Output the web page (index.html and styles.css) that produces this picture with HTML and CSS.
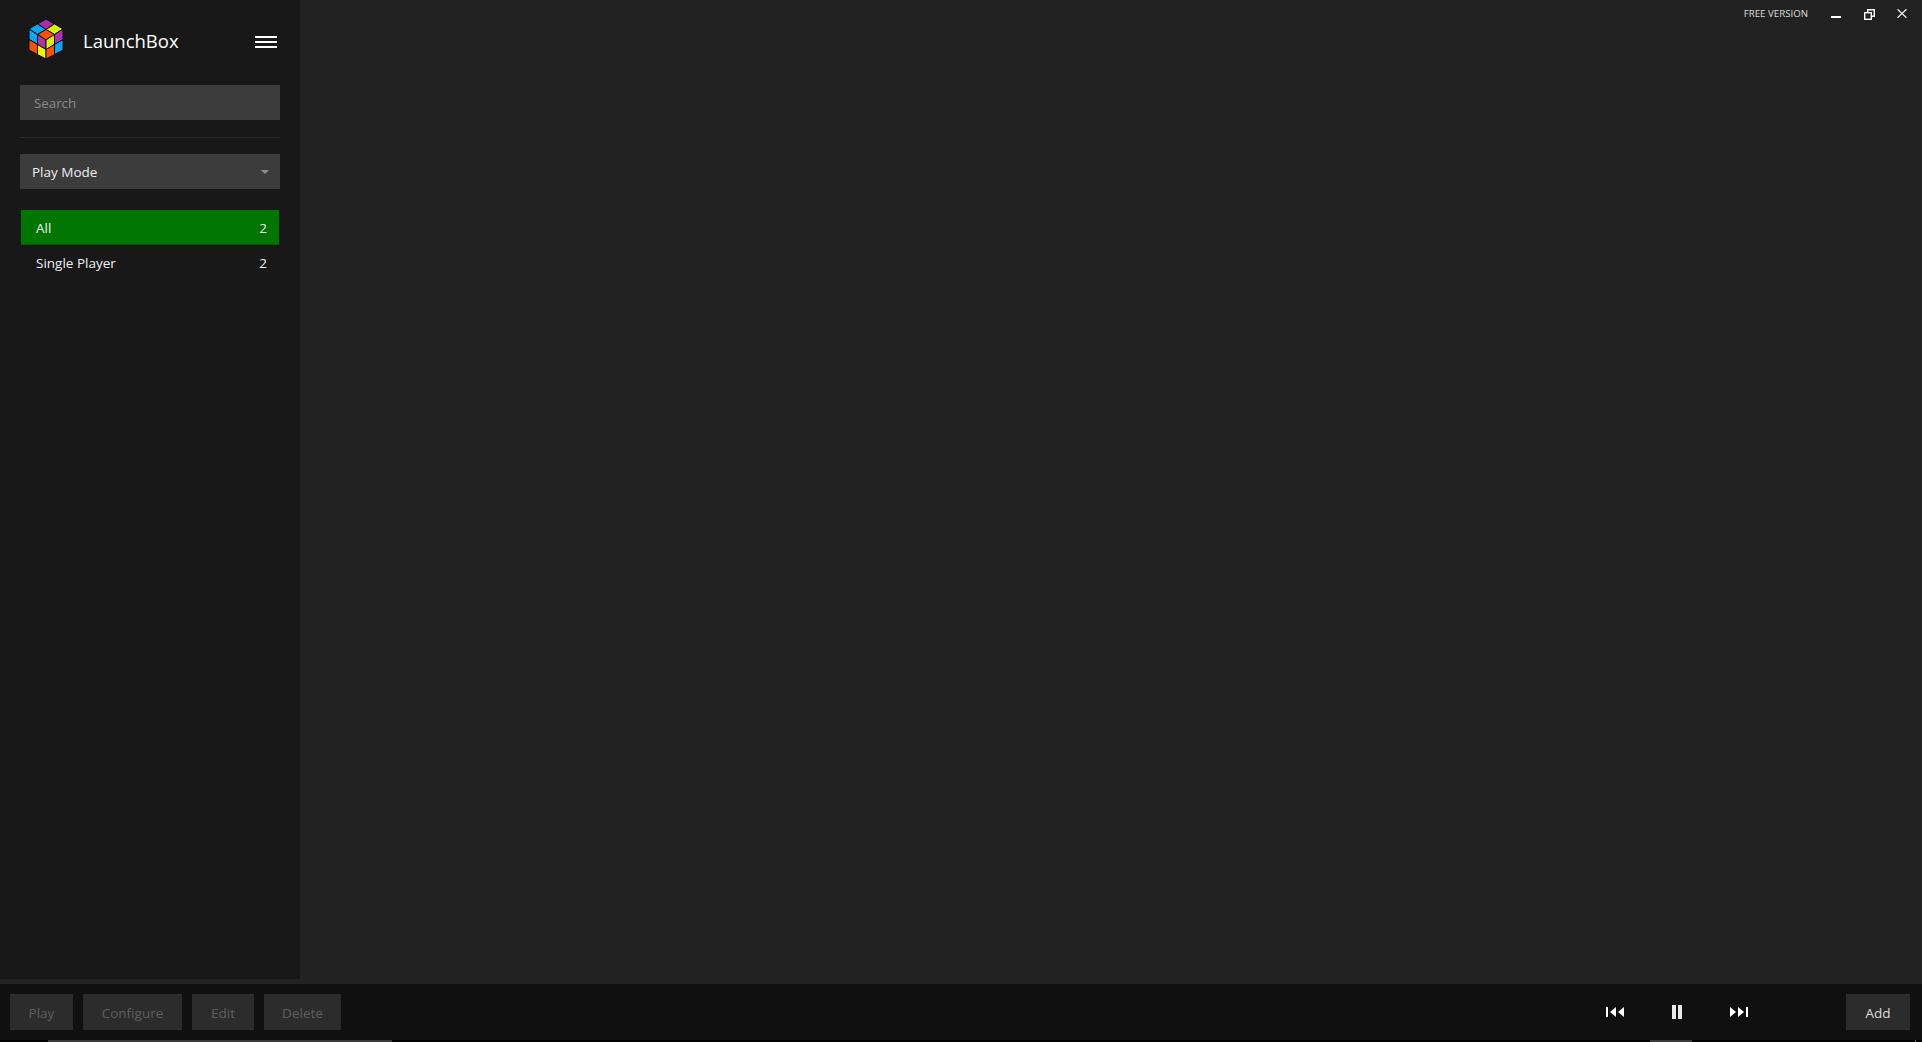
FILE: index.html
```html
<!DOCTYPE html>
<html lang="en">
<head>
    <meta charset="UTF-8" />
    <title>LaunchBox</title>
    <link rel="stylesheet" href="styles.css">
</head>
<body>
    <div class="main">
        <aside class="sidebar">
            <div class="brand">
                <svg class="logo" width="36" height="42" viewBox="-1 -1 36 42" stroke="#000" stroke-width="0.9" stroke-linejoin="round">
                    <polygon points="17,0 25.5,5 17,10.5 8.5,5" fill="#a62cb0" />
                    <polygon points="8.5,5 17,10.5 8.5,15.5 0,10" fill="#04a8fa" />
                    <polygon points="25.5,5 34,10 25.5,15.5 17,10.5" fill="#d8f800" />
                    <polygon points="17,10.5 25.5,15.5 17,21 8.5,15.5" fill="#ff5200" />
                    <polygon points="0,10 8.5,15.5 8.5,25.5 0,20.5" fill="#04a8fa" />
                    <polygon points="8.5,15.5 17,21 17,30.5 8.5,25.5" fill="#b032b4" />
                    <polygon points="0,20.5 8.5,25.5 8.5,35.5 0,31" fill="#ff5200" />
                    <polygon points="8.5,25.5 17,30.5 17,40 8.5,35.5" fill="#e8fa00" />
                    <polygon points="17,21 25.5,15.5 25.5,25.5 17,30.5" fill="#d8f800" />
                    <polygon points="25.5,15.5 34,10 34,20.5 25.5,25.5" fill="#b032b4" />
                    <polygon points="17,30.5 25.5,25.5 25.5,35.5 17,40" fill="#ff5200" />
                    <polygon points="25.5,25.5 34,20.5 34,31 25.5,35.5" fill="#04a8fa" />
                </svg>
                <span class="brand-name">LaunchBox</span>
                <div class="burger"><i></i><i></i><i></i></div>
            </div>

            <div class="search">Search</div>
            <div class="divider"></div>

            <div class="dropdown">
                <span>Play Mode</span>
                <span class="caret"></span>
            </div>

            <ul class="filters">
                <li class="active"><span>All</span><span>2</span></li>
                <li><span>Single Player</span><span>2</span></li>
            </ul>
        </aside>

        <section class="content">
            <div class="titlebar">
                <span class="version">FREE VERSION</span>
                <svg class="win-min" width="10" height="3" viewBox="0 0 10 3"><rect width="10" height="2" y="1" fill="#fff" /></svg>
                <svg class="win-max" width="11" height="11" viewBox="0 0 11 11" fill="none" stroke="#fff" stroke-width="1.4">
                    <rect x="0.7" y="3.7" width="6.6" height="6.6" />
                    <path d="M3.7 3.5V0.7H10.3V7.3H7.5" />
                </svg>
                <svg class="win-close" width="10" height="9" viewBox="0 0 10 9" stroke="#eee" stroke-width="1.3"><path d="M0.5 0.3L9.5 8.7M9.5 0.3L0.5 8.7" /></svg>
            </div>
        </section>
    </div>

    <footer class="toolbar">
        <div class="actions">
            <button class="btn disabled">Play</button>
            <button class="btn disabled">Configure</button>
            <button class="btn disabled">Edit</button>
            <button class="btn disabled">Delete</button>
        </div>
        <div class="player">
            <svg width="18" height="10" viewBox="0 0 18 10" fill="#fff">
                <rect x="0" y="0" width="2" height="10" />
                <polygon points="10,0 10,10 4,5" />
                <polygon points="18,0 18,10 12,5" />
            </svg>
            <svg width="10" height="14" viewBox="0 0 10 14" fill="#e8e8e8">
                <rect x="0" y="0" width="4" height="14" />
                <rect x="6" y="0" width="4" height="14" />
            </svg>
            <svg width="18" height="10" viewBox="0 0 18 10" fill="#fff">
                <polygon points="0,0 0,10 6,5" />
                <polygon points="8,0 8,10 14,5" />
                <rect x="16" y="0" width="2" height="10" />
            </svg>
        </div>
        <button class="btn add">Add</button>
    </footer>
    <div class="scrollstrip">
        <div class="thumb-left"></div>
        <div class="thumb-right"></div>
        <div class="tick"></div>
    </div>
</body>
</html>
```

FILE: styles.css
```css
* {
    box-sizing: border-box;
}

html, body {
    height: 100%;
}

body {
    margin: 0;
    display: flex;
    flex-direction: column;
    background-color: #222222;
    font-family: "Open Sans", "Noto Sans", sans-serif;
    color: white;
    overflow: hidden;
}

.main {
    flex: 1;
    display: flex;
    padding-bottom: 5px;
    min-height: 0;
}

.sidebar {
    width: 300px;
    background-color: #181818;
    padding: 0 20px;
}

.brand {
    height: 85px;
    display: flex;
    align-items: center;
    padding: 0 3px 2px 8px;
}

.logo {
    margin: 0 19px 5px 0;
}

.brand-name {
    flex: 1;
    padding-bottom: 2px;
    font-size: 18.5px;
}

.burger {
    width: 22px;
    display: flex;
    flex-direction: column;
    gap: 3px;
}

    .burger i {
        display: block;
        height: 2px;
        background-color: white;
    }

.search {
    height: 35px;
    line-height: 36px;
    padding-left: 14px;
    background-color: #3c3c3c;
    color: #8a8a8a;
    font-size: 13.3px;
}

.divider {
    height: 1px;
    margin: 17px 0 16px;
    background-color: #2c2c2c;
}

.dropdown {
    height: 35px;
    display: flex;
    align-items: center;
    justify-content: space-between;
    padding: 0 11px 0 12px;
    background-color: #3c3c3c;
    color: #eeeeee;
    font-size: 13.5px;
}

.caret {
    border-left: 4px solid transparent;
    border-right: 4px solid transparent;
    border-top: 4px solid #8f8f8f;
}

.filters {
    list-style: none;
    margin: 21px 1px 0;
    padding: 0;
    font-size: 13.5px;
}

    .filters li {
        height: 35px;
        display: flex;
        align-items: center;
        justify-content: space-between;
        padding: 0 12px 0 15px;
        color: #f2f2f2;
    }

        .filters li.active {
            padding-top: 1px;
            background-color: #007500;
            border-bottom: 1px solid #005a00;
        }

.content {
    flex: 1;
}

.titlebar {
    height: 28px;
    display: flex;
    align-items: center;
    justify-content: flex-end;
    padding-right: 15px;
}

.version {
    padding-bottom: 2px;
    font-size: 9.7px;
    color: #dddddd;
    margin-right: 23px;
}

.win-min {
    margin: 4px 23px 0 0;
}

.win-max {
    margin-right: 22px;
}

.win-close {
    margin-bottom: 2px;
}

.toolbar {
    height: 56px;
    display: flex;
    align-items: center;
    padding: 0 12px 0 10px;
    background-color: #101010;
}

.actions {
    display: grid;
    grid-template-columns: 63px 99px 62px 77px;
    gap: 10px;
    margin-right: auto;
}

.btn {
    height: 36px;
    padding: 2px 0 0;
    border: none;
    background-color: #2c2c2c;
    color: #dddddd;
    font-family: "Open Sans", "Noto Sans", sans-serif;
    font-size: 13.5px;
}

    .btn.disabled {
        color: #5f5f5f;
    }

.player {
    display: flex;
    align-items: center;
    gap: 48px;
    margin-right: 98px;
}

.add {
    width: 64px;
}

.scrollstrip {
    height: 2px;
    display: flex;
    padding: 0 6px 0 48px;
    background-color: #000000;
}

.thumb-left {
    width: 344px;
    background-color: #3a3a3a;
}

.thumb-right {
    width: 42px;
    margin-left: auto;
    background-color: #3a3a3a;
}

.tick {
    width: 1px;
    margin-left: 223px;
    background-color: #6a6a6a;
}
```
